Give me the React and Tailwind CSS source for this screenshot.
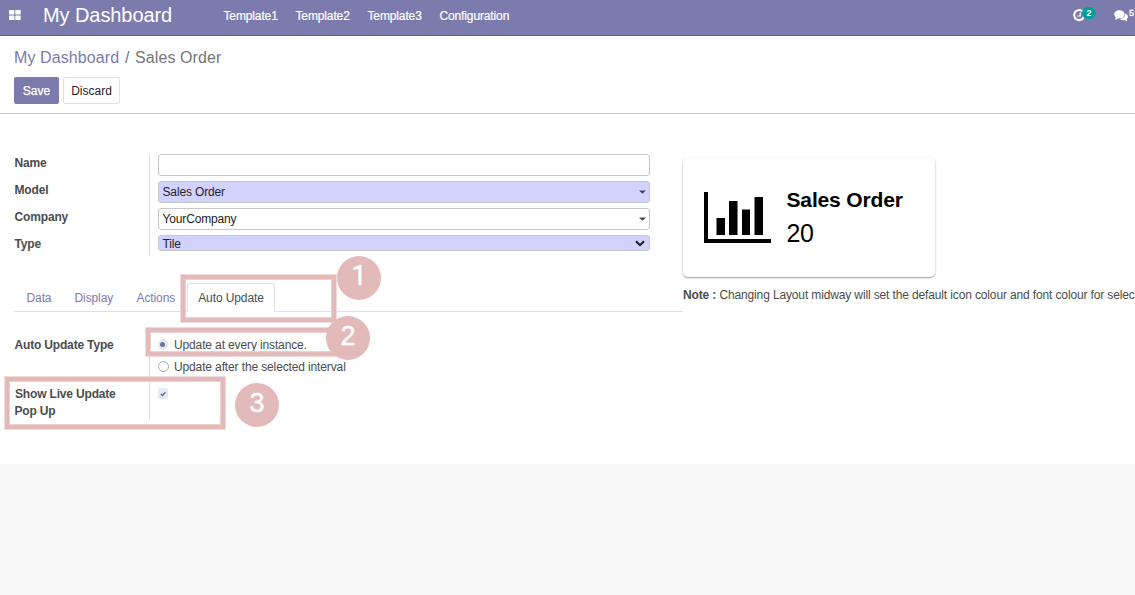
import React from "react";

const fields = [
  { label: "Name", value: "", kind: "text" },
  { label: "Model", value: "Sales Order", kind: "required" },
  { label: "Company", value: "YourCompany", kind: "optional" },
  { label: "Type", value: "Tile", kind: "select" },
];

function Caret() {
  return (
    <svg className="h-[4px] w-[7px]" viewBox="0 0 7 4">
      <path d="M0 0.5H7L3.5 3.8Z" fill="#444" />
    </svg>
  );
}

function Chevron() {
  return (
    <svg className="h-[7px] w-[10px]" viewBox="0 0 10 7">
      <path d="M1 1.2L5 5.2L9 1.2" fill="none" stroke="#1a1a1a" strokeWidth="2" />
    </svg>
  );
}

function Field({ kind, value }) {
  const tall = kind !== "select";
  const tinted = kind === "required" || kind === "select";
  return (
    <div
      className={`flex w-[492px] items-center justify-between rounded-[3px] border border-[#c8c8c8] pr-[3px] pl-[3.5px] tracking-[-0.15px] text-[#1f2328] ${tall ? "h-[22px]" : "h-[16px] pr-[4px]"} ${tinted ? "bg-[#d2d2ff]" : "bg-white"}`}
    >
      <span className={tall ? "" : "pt-[2px]"}>{value}</span>
      {(kind === "required" || kind === "optional") && <Caret />}
      {kind === "select" && <Chevron />}
    </div>
  );
}

function Navbar() {
  return (
    <header className="flex h-[36px] items-start border-b border-[#5f5e97] bg-[#7c7bad] text-white">
      <svg className="mt-[10px] ml-[9px] h-[10px] w-[12px] shrink-0" viewBox="0 0 12 10" fill="#fff">
        <rect x="0" y="0" width="5.4" height="4.5" rx=".5" />
        <rect x="6.3" y="0" width="5.4" height="4.5" rx=".5" />
        <rect x="0" y="5.4" width="5.4" height="4.5" rx=".5" />
        <rect x="6.3" y="5.4" width="5.4" height="4.5" rx=".5" />
      </svg>
      <div className="ml-[22px] w-[180.5px] text-[20px] leading-[30px] tracking-[-0.08px]">My Dashboard</div>
      <nav className="flex pt-[8px] leading-[16px] tracking-[-0.13px] [-webkit-text-stroke:0.2px_white]">
        <span className="w-[72px]">Template1</span>
        <span className="w-[72px]">Template2</span>
        <span className="w-[72px]">Template3</span>
        <span>Configuration</span>
      </nav>
      <div className="relative mt-[9px] ml-auto h-[13px] w-[41.5px]">
        <svg className="h-[13px] w-[13px]" viewBox="0 0 13 13" fill="none" stroke="#fff">
          <path d="M9.8 2.6A5 5 0 1 0 10.8 8" strokeWidth="2.1" />
          <path d="M7.2 3.5V7H4.3" strokeWidth="1.2" />
        </svg>
        <span className="absolute top-[-2px] left-[9.5px] h-[12px] w-[14px] rounded-full bg-[#00a09d] text-center text-[9px] leading-[12px] font-bold">2</span>
      </div>
      <div className="relative mt-[10px] h-[12px] w-[21px]">
        <svg className="h-[12px] w-[14px]" viewBox="0 0 14 12" fill="#fff">
          <ellipse cx="5.4" cy="4.3" rx="5.2" ry="4" />
          <path d="M2 7L1 10L5 8Z" />
          <path d="M11.3 3.2C14.7 5 14.5 8 12.6 9.1L13.4 11.4L10.5 10C8.5 10.5 6.5 10 5.5 9.1C9 9 11.5 6.4 11.3 3.2Z" />
        </svg>
        <span className="absolute top-[-2px] left-[15px] text-[9px] leading-[11px] [-webkit-text-stroke:0.3px_white]">5</span>
      </div>
    </header>
  );
}

function ControlPanel() {
  return (
    <section className="h-[78px] border-b border-[#c9c9c9] bg-white pt-[12px] pl-[14px]">
      <div className="flex text-[16px] leading-[20px] tracking-[0.1px] text-[#75757a]">
        <span className="w-[111px] text-[#7c7bad]">My Dashboard</span>
        <span className="w-[10px]">/</span>
        <span>Sales Order</span>
      </div>
      <div className="mt-[9px] flex gap-[4px]">
        <button className="h-[27px] w-[45px] rounded-[2px] bg-[#7c7bad] text-white [-webkit-text-stroke:0.25px_white]">Save</button>
        <button className="h-[27px] w-[57px] rounded-[2px] border border-[#dee2e6] bg-white text-[#1f2328]">Discard</button>
      </div>
    </section>
  );
}

function Tabs() {
  return (
    <div className="mt-[27px] ml-[14px] flex h-[29px] border-b border-[#dee2e6] leading-[30px] tracking-[-0.1px] text-[#7c7bad]">
      <span className="w-[48px] pl-[12.5px]">Data</span>
      <span className="w-[62px] pl-[12.5px]">Display</span>
      <span className="w-[63px] pl-[12.5px]">Actions</span>
      <span className="-mb-px h-[29px] w-[88px] rounded-t-[3px] border border-b-0 border-[#dee2e6] bg-white text-center leading-[29px] text-[#495057]">Auto Update</span>
    </div>
  );
}

function UpdateSettings() {
  return (
    <div className="mt-[22px] ml-[14px] flex h-[86px] tracking-[-0.13px] text-[#4c4c4c]">
      <div className="flex w-[135px] flex-col pl-[0.5px] font-bold tracking-[-0.17px]">
        <div className="h-[52px] leading-[22px]">Auto Update Type</div>
        <div className="leading-[17px]"><span className="ml-[0.5px]">Show Live Update</span><br />Pop Up</div>
      </div>
      <div className="border-l border-[#dcdcdc] pl-[8px]">
        <div className="flex h-[22px] items-center">
          <span className="-mt-px -ml-[0.5px] flex h-[11px] w-[10px] items-center justify-center rounded-full bg-[#e6e9ed]">
            <span className="h-[5px] w-[5px] rounded-full bg-[#7270a8]" />
          </span>
          <span className="ml-[6.5px]">Update at every instance.</span>
        </div>
        <div className="flex h-[22px] items-center">
          <span className="-mt-px -ml-[0.5px] h-[11px] w-[11px] rounded-full border border-[#a8afb7] bg-white" />
          <span className="ml-[5.5px]">Update after the selected interval</span>
        </div>
        <div className="mt-[10px] flex h-[11px] w-[10px] items-center justify-center rounded-[2px] bg-[#e6e9ed]">
          <svg className="h-[6px] w-[6px]" viewBox="0 0 6 6">
            <path d="M.8 3L2.4 4.6L5.3 1.2" fill="none" stroke="#7270a8" strokeWidth="1.5" />
          </svg>
        </div>
      </div>
    </div>
  );
}

function Preview() {
  return (
    <aside className="w-[452px] shrink-0 pt-[44px] whitespace-nowrap">
      <div className="flex h-[119px] w-[252px] rounded-[5px] bg-white pl-[20.5px] text-black shadow-[0_1px_2px_rgba(0,0,0,0.4)]">
        <svg className="mt-[34px] h-[52px] w-[67px]" viewBox="0 0 67 52">
          <path d="M0 0H4V47H67V51H0ZM12.5 26H21V43H12.5ZM25 9H33.500V43H25ZM38 17.500H46V43H38ZM50.500 5H59V43H50.500Z" />
        </svg>
        <div className="ml-[16px] pt-[27px]">
          <div className="text-[21px] leading-[30px] font-bold tracking-[-0.15px]">Sales Order</div>
          <div className="text-[25px] leading-[36px] tracking-[-0.3px]">20</div>
        </div>
      </div>
      <div className="mt-[10px] leading-[16px] tracking-[-0.135px] text-[#4c4c4c]"><b>Note :</b> Changing Layout midway will set the default icon colour and font colour for selec</div>
    </aside>
  );
}

function Annotations() {
  return (
    <div className="pointer-events-none absolute inset-0 text-[27px] leading-[40px] text-white [-webkit-text-stroke:0.4px_white]">
      <div className="absolute top-[275px] left-[181px] h-[47px] w-[155px] border-4 border-[#e3baba] shadow-[0_0_0_1px_#f1dada,inset_0_0_0_1px_#eccfcf]" />
      <div className="absolute top-[328px] left-[146px] h-[28px] w-[205px] border-4 border-[#e3baba] shadow-[0_0_0_1px_#f1dada,inset_0_0_0_1px_#eccfcf]" />
      <div className="absolute top-[377px] left-[5px] h-[52px] w-[220px] border-4 border-[#e3baba] shadow-[0_0_0_1px_#f1dada,inset_0_0_0_1px_#eccfcf]" />
      <div className="absolute top-[256px] left-[337px] h-[44px] w-[44px] rounded-full bg-[#e3baba] text-center font-[Roboto,sans-serif]">1</div>
      <div className="absolute top-[316px] left-[326px] h-[44px] w-[44px] rounded-full bg-[#e3baba] text-center">2</div>
      <div className="absolute top-[383px] left-[235px] h-[44px] w-[44px] rounded-full bg-[#e3baba] text-center">3</div>
    </div>
  );
}

export default function App() {
  return (
    <div className="relative h-[595px] w-[1135px] overflow-hidden bg-[#f9f9f9] font-['Liberation_Sans',Arial,sans-serif] text-[12px]">
      <Navbar />
      <ControlPanel />
      <main className="flex h-[350px] bg-white">
        <div className="w-[683px] shrink-0 pt-[40px]">
          <div className="flex h-[102px] pl-[14px]">
            <div className="w-[135px] pl-[0.5px] font-bold tracking-[-0.15px] text-[#4c4c4c]">
              {fields.map((f) => (
                <div key={f.label} className="h-[27px] leading-[18px]">{f.label}</div>
              ))}
            </div>
            <div className="flex flex-col gap-[5px] border-l border-[#dcdcdc] pl-[8px]">
              {fields.map((f) => (
                <Field key={f.label} kind={f.kind} value={f.value} />
              ))}
            </div>
          </div>
          <Tabs />
          <UpdateSettings />
        </div>
        <Preview />
      </main>
      <Annotations />
    </div>
  );
}
